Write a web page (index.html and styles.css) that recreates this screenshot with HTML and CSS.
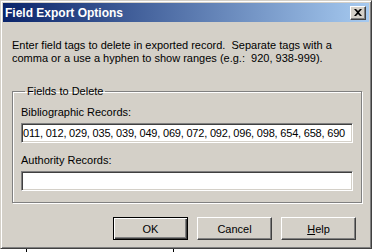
FILE: index.html
```html
<!DOCTYPE html>
<html lang="en">
<head>
    <meta charset="UTF-8">
    <title>Field Export Options</title>
    <link rel="stylesheet" href="styles.css">
</head>
<body>

<div class="window">
    <div class="titleBar">
        <span class="titleText">Field Export Options</span>
        <button type="button" class="closeButton">
            <svg width="8" height="7" viewBox="0 0 8 7"><path d="M0 0h2l2 2 2-2h2L5 3.5 8 7H6L4 5 2 7H0l3-3.5z" fill="#000"/></svg>
        </button>
    </div>
    <div class="content">
        <p class="intro">Enter field tags to delete in exported record.&nbsp; Separate tags with a comma or a use a hyphen to show ranges (e.g.:&nbsp; 920, 938-999).</p>
        <fieldset class="groupBox">
            <legend>Fields to Delete</legend>
            <label for="bib">Bibliographic Records:</label>
            <input type="text" id="bib" class="textInput" value="011, 012, 029, 035, 039, 049, 069, 072, 092, 096, 098, 654, 658, 690">
            <label for="auth">Authority Records:</label>
            <input type="text" id="auth" class="textInput" value="">
        </fieldset>
        <div class="buttonRow">
            <button type="button" class="dlgButton defaultButton">OK</button>
            <button type="button" class="dlgButton">Cancel</button>
            <button type="button" class="dlgButton"><u>H</u>elp</button>
        </div>
    </div>
</div>
<div class="behind">
    <div class="behindCell"></div>
    <div class="behindCell wide"></div>
</div>

</body>
</html>
```

FILE: styles.css
```css
body {
    margin: 0;
    background-color: #fff;
    font-family: "Liberation Sans", Arial, sans-serif;
    font-size: 11px;
    color: #000;
}
.window {
    width: 372px;
    height: 249px;
    box-sizing: border-box;
    background-color: #d4d0c8;
    border-top: 1px solid #d4d0c8;
    border-left: 1px solid #d4d0c8;
    border-right: 1px solid #404040;
    border-bottom: 1px solid #404040;
    box-shadow: inset 1px 1px #fff, inset -1px -1px #808080;
    padding: 2px;
    display: flex;
    flex-direction: column;
}
.titleBar {
    height: 19px;
    background: linear-gradient(to right, #0a246a, #a6caf0);
    display: flex;
    align-items: center;
    justify-content: space-between;
    padding: 0 3px 0 2px;
}
.titleText {
    color: #fff;
    font-weight: bold;
    font-size: 12px;
}
.closeButton {
    width: 16px;
    height: 14px;
    padding: 0;
    background-color: #d4d0c8;
    border: 1px solid;
    border-color: #fff #404040 #404040 #fff;
    box-shadow: inset -1px -1px #808080;
    display: flex;
    align-items: center;
    justify-content: center;
}
.content {
    padding: 0 7px 0 9px;
    display: flex;
    flex-direction: column;
}
.intro {
    margin: 17px 0 0 0;
    line-height: 13px;
}
.groupBox {
    margin: 20px 0 0 0;
    padding: 9px 8px 11px 8px;
    border: 1px solid #808080;
    box-shadow: 1px 1px #fff, inset 1px 1px #fff;
    display: flex;
    flex-direction: column;
}
.groupBox legend {
    padding: 0 2px;
    margin-left: 4px;
}
.groupBox label {
    display: block;
    margin-bottom: 5px;
}
.textInput {
    height: 20px;
    box-sizing: border-box;
    margin: 0 0 11px 0;
    padding: 0 1px;
    font-family: "Liberation Sans", Arial, sans-serif;
    font-size: 11px;
    letter-spacing: -0.2px;
    background-color: #fff;
    border: 1px solid;
    border-color: #808080 #fff #fff #808080;
    box-shadow: inset 1px 1px #404040, inset -1px -1px #d4d0c8;
}
.textInput:last-child {
    margin-bottom: 0;
}
.buttonRow {
    margin-top: 14px;
    display: flex;
    justify-content: flex-end;
    gap: 9px;
    padding-right: 6px;
}
.dlgButton {
    width: 75px;
    height: 23px;
    padding: 0;
    font-family: "Liberation Sans", Arial, sans-serif;
    font-size: 11px;
    color: #000;
    background-color: #d4d0c8;
    border: 1px solid;
    border-color: #fff #404040 #404040 #fff;
    box-shadow: inset -1px -1px #808080;
}
.defaultButton {
    border: 1px solid #000;
    box-shadow: inset 1px 1px #fff, inset -1px -1px #404040, inset -2px -2px #808080;
}
.behind {
    height: 3px;
    display: flex;
    background-color: #fff;
}
.behindCell {
    width: 26px;
    border-right: 1px solid #000;
}
.behindCell.wide {
    width: 146px;
}
```
